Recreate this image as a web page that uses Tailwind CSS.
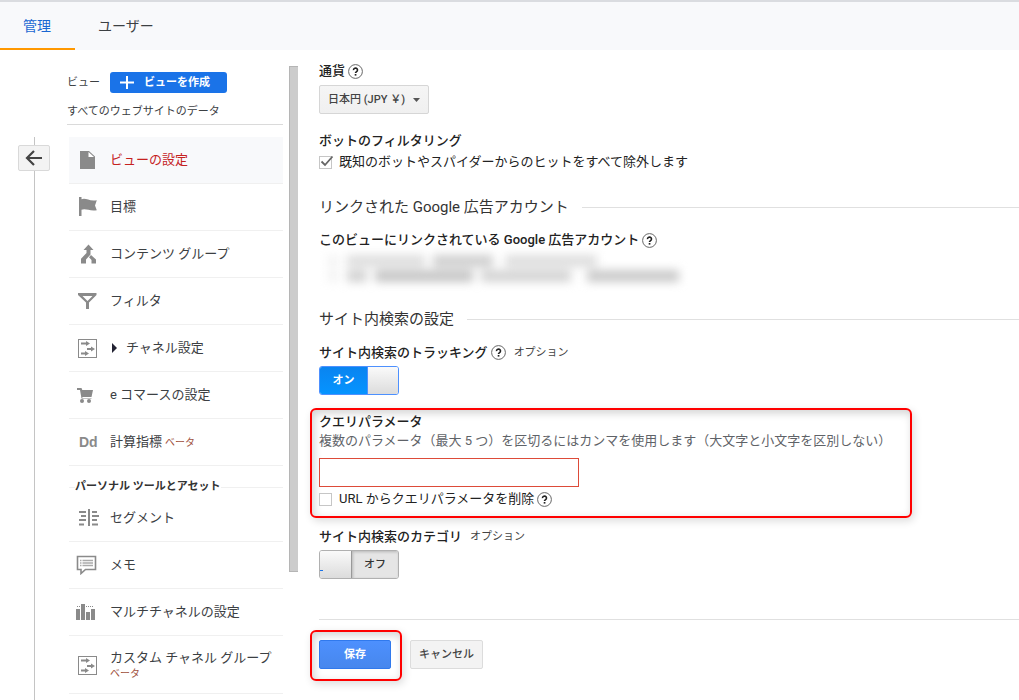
<!DOCTYPE html>
<html lang="ja">
<head>
<meta charset="utf-8">
<meta name="viewport" content="width=device-width, initial-scale=1">
<title>ビューの設定</title>
<script src="https://cdn.jsdelivr.net/npm/@tailwindcss/browser@4"></script>
</head>
<body class="flex h-screen flex-col overflow-hidden bg-white font-[Roboto,'Noto_Sans_CJK_JP',sans-serif] text-[13px] leading-[18px] text-[#222]">

<svg class="hidden" aria-hidden="true">
  <symbol id="help" viewBox="0 0 15 15">
    <circle cx="7.5" cy="7.5" r="6.9" fill="#fff" stroke="#666" stroke-width="1"/>
    <path d="M5.5 6.1a2 1.9 0 1 1 3.1 1.5c-.7.5-1.1.8-1.1 1.5" fill="none" stroke="#222" stroke-width="1.6"/>
    <rect x="6.7" y="10" width="1.7" height="1.6" fill="#222"/>
  </symbol>
  <symbol id="channel" viewBox="0 0 20 20">
    <rect x="1.5" y="1.5" width="18" height="18" fill="none" stroke="#8a8a8a"/>
    <path d="M4 4.500h5V3l4 2.500L9 8V6.500H4zM10 10h4V8.500l4 2.500-4 2.500V12h-4zM4 14.500h4V13l4 2.500L8 18v-1.500H4z" fill="#8a8a8a"/>
  </symbol>
</svg>

<header class="shrink-0 border-t border-[#dadce0] bg-white text-sm leading-5">
  <nav class="flex h-[49px] border-t border-[#dadce0] bg-[#f8f9fb]">
    <a href="#" class="border-b-2 border-[#ff9800] pt-[14px] pr-6 pl-[23px] text-[#1967d2]">管理</a>
    <a href="#" class="px-[23px] pt-[14px] text-[#3c4043]">ユーザー</a>
  </nav>
</header>

<div class="flex min-h-0 flex-1">
  <div class="flex w-[67px] shrink-0 flex-col pt-[87px]">
    <div class="ml-[34px] h-2 w-px shrink-0 bg-[#c4c4c4]"></div>
    <button type="button" aria-label="戻る" class="ml-[18px] flex h-[26px] w-8 shrink-0 items-center justify-center rounded-xs border border-[#d9d9d9] bg-[#f3f3f3]">
      <svg width="18" height="16" viewBox="0 0 18 16" fill="none" stroke="#444" stroke-width="2.200"><path d="M17 8H2M9 1L2 8l7 7"/></svg>
    </button>
    <div class="ml-[34px] w-px flex-1 bg-[#c4c4c4]"></div>
  </div>

  <aside class="w-[216px] shrink-0 pt-[22px]">
    <div class="flex h-[21px] items-center gap-[10px] text-[11px] text-[#3c4043]">
      <span>ビュー</span>
      <button type="button" class="flex h-[21px] w-[117px] items-center gap-[10px] rounded-[3px] bg-[#1a73e8] pl-[10px] font-bold text-white">
        <svg width="14" height="13" viewBox="0 0 14 13" stroke="#fff" stroke-width="2"><path d="M7 0v13M0 6.500h14"/></svg>
        ビューを作成
      </button>
    </div>
    <div class="mt-[10px] border-b border-[#dadada] pb-[3px] text-[11px] text-[#3c4043]">すべてのウェブサイトのデータ</div>

    <ul class="mt-3 ml-[2px] text-[#3c4043]">
      <li class="border-b border-[#f0f0f0] bg-[#f8f9fb]"><a href="#" class="flex h-[46px] items-center text-[#c5221f]">
        <span class="w-[41px] pl-2"><svg width="20" height="20" viewBox="0 0 20 20"><path d="M3 1h9l6 5.500V19H3z" fill="#8a8a8a"/><path d="M11.500 2v5H17z" fill="#fff"/></svg></span>ビューの設定</a></li>
      <li class="border-b border-[#f0f0f0]"><a href="#" class="flex h-[46px] items-center">
        <span class="w-[41px] pl-2"><svg width="20" height="20" viewBox="0 0 20 20" fill="#8a8a8a"><path d="M2 0h2.500v19H2zM4 2.500c5-2.300 7 2 15.800.8L18 8.500l1.800 4.800C12 14.500 9 11 4 13z"/></svg></span>目標</a></li>
      <li class="border-b border-[#f0f0f0]"><a href="#" class="flex h-[46px] items-center">
        <span class="w-[41px] pl-2"><svg width="20" height="20" viewBox="0 0 20 20" fill="#8a8a8a"><path d="M11.500 0.500L16.500 6h-3v4.500L9 15.500v4H4v-4.800L9.500 9V6h-3zM14 11l5 4.500v4h-4.500V16L12 13.300z"/></svg></span>コンテンツ グループ</a></li>
      <li class="border-b border-[#f0f0f0]"><a href="#" class="flex h-[46px] items-center">
        <span class="w-[41px] pl-2"><svg width="20" height="20" viewBox="0 0 20 20"><path fill-rule="evenodd" fill="#8a8a8a" d="M1 2h18.500v2L12 11.500V18H9v-6.500L1 4zM5.500 5l5 5 5-5z"/></svg></span>フィルタ</a></li>
      <li class="border-b border-[#f0f0f0]"><a href="#" class="flex h-[46px] items-center">
        <span class="w-[41px] pl-2"><svg width="20" height="20"><use href="#channel"/></svg></span><svg class="mr-[9px] ml-[2px]" width="5" height="10" viewBox="0 0 5 10"><path d="M0 0l5 5-5 5z" fill="#223"/></svg>チャネル設定</a></li>
      <li class="border-b border-[#f0f0f0]"><a href="#" class="flex h-[46px] items-center">
        <span class="w-[41px] pl-2"><svg width="20" height="20" viewBox="0 0 20 20" fill="#8a8a8a"><path d="M0 3h4.500l.8 2H16l-1.500 7H5.500L5 14h9.500v-.5H4.500L3 5H0z"/><circle cx="5" cy="16" r="2"/><circle cx="12" cy="16" r="2"/></svg></span>e コマースの設定</a></li>
      <li class="border-b border-[#f0f0f0]"><a href="#" class="flex h-[46px] items-center">
        <span class="w-[41px] pl-[10px] font-['Liberation_Sans',sans-serif] text-sm font-bold text-[#8a8a8a]">Dd</span>計算指標<span class="ml-[3px] pt-px text-[10px] text-[#a0503c]">ベータ</span></a></li>
    </ul>
    <h2 class="mt-[13px] ml-[2px] flex h-4 items-center text-[11px] font-bold text-[#333] before:h-px before:w-[6px] before:bg-[#f0f0f0] after:h-px after:flex-1 after:bg-[#f0f0f0]">パーソナル ツールとアセット</h2>
    <ul class="ml-[2px] text-[#3c4043]">
      <li class="border-b border-[#f0f0f0]"><a href="#" class="flex h-[46px] items-center">
        <span class="w-[41px] pl-[9px]"><svg width="22" height="18" viewBox="0 0 22 18" fill="#8a8a8a"><path d="M1 2h7v2H1zM3 6h5v2H3zM1 10h7v2H1zM1 14.500h5v2H1zM10 0h2v17h-2zM14 2h5v2h-5zM14 6h7v2h-7zM14 10h5v2h-5zM14 14.500h6v2h-6z"/></svg></span>セグメント</a></li>
      <li class="border-b border-[#f0f0f0]"><a href="#" class="flex h-[46px] items-center">
        <span class="w-[41px] pl-[7px]"><svg width="21" height="20" viewBox="0 0 21 20"><path d="M1.500 1.500h18v13H9.500L5 18.500v-4H1.500z" fill="none" stroke="#8a8a8a" stroke-width="1.600"/><path d="M4 5.500h1.500M4 8h1.500M4 10.500h1.500M6.500 5.500H17M6.500 8H17M6.500 10.500H17" stroke="#aaa" stroke-width="1.400"/></svg></span>メモ</a></li>
      <li class="border-b border-[#f0f0f0]"><a href="#" class="flex h-[46px] items-center">
        <span class="w-[41px] pl-[7px]"><svg width="20" height="18" viewBox="0 0 20 18" fill="#8a8a8a"><path d="M0 6h4v11H0zM5 1h4v16H5zM10 9h4v8h-4zM15 6h4v11h-4zM1 3h1v1H1zM3 3h1v1H3zM10 3h1v1h-1zM12 3h1v1h-1zM14 3h1v1h-1zM16 3h1v1h-1z"/></svg></span>マルチチャネルの設定</a></li>
      <li class="border-b border-[#f0f0f0]"><a href="#" class="flex h-[57px] items-center">
        <span class="w-[41px] pl-2"><svg width="20" height="20"><use href="#channel"/></svg></span>
        <span>カスタム チャネル グループ<span class="block text-[10px] leading-[14px] text-[#a0503c]">ベータ</span></span></a></li>
    </ul>
  </aside>

  <div class="mt-4 ml-[6px] h-[506px] w-[9px] shrink-0 border border-r-0 border-[#b5b5b5] bg-[#ccc]"></div>

  <main class="ml-[21px] min-w-0 flex-1 pt-3">
    <form>
      <div class="flex items-center gap-[3px]"><label for="currency" class="font-medium">通貨</label><svg width="15" height="15" role="img" aria-label="ヘルプ"><use href="#help"/></svg></div>
      <div class="relative mt-[5px] w-[110px]">
        <select id="currency" class="block h-[29px] w-full appearance-none rounded-xs border border-[#d6d6d6] bg-linear-to-b from-[#f5f5f5] to-[#f0f0f0] pl-2 text-[11px] font-medium text-[#444]"><option>日本円 (JPY ￥)</option></select>
        <svg class="pointer-events-none absolute top-[13px] right-[9px]" width="7" height="4" viewBox="0 0 7 4"><path d="M0 0h7L3.500 4z" fill="#555"/></svg>
      </div>

      <h3 class="mt-[18px] font-medium">ボットのフィルタリング</h3>
      <label class="mt-[3px] flex items-center gap-[7px]">
        <span class="relative flex">
          <input type="checkbox" checked class="size-[13px] appearance-none border border-[#c6c6c6] bg-white">
          <svg class="absolute -top-[2px] left-[1px]" width="15" height="14" viewBox="0 0 15 14"><path d="M1.500 7.500l3.500 3.500L12.500 2.500" fill="none" stroke="#666" stroke-width="1.800"/></svg>
        </span>既知のボットやスパイダーからのヒットをすべて除外します</label>

      <h2 class="mt-[26px] flex items-center gap-[13px] text-[15px] leading-5 text-[#333] after:h-px after:flex-1 after:bg-[#e0e0e0]">リンクされた Google 広告アカウント</h2>
      <div class="mt-[14px] flex items-center gap-[3px]"><h3 class="font-medium">このビューにリンクされている Google 広告アカウント</h3><svg width="15" height="15" role="img" aria-label="ヘルプ"><use href="#help"/></svg></div>
      <!-- Masked account names -->
      <div aria-hidden="true" class="flex h-11 flex-col gap-[3px] pt-[6px] pl-2 blur-[5px]">
        <div class="flex h-3 gap-2"><i class="w-3 bg-[#f4f4f4]"></i><i class="w-[78px] bg-[#dedede]"></i><i class="w-[60px] bg-[#cfcfcf]"></i><i class="ml-1 w-[92px] bg-[#dedede]"></i></div>
        <div class="flex h-3 gap-2"><i class="w-3 bg-[#f4f4f4]"></i><i class="w-5 bg-[#d2d2d2]"></i><i class="w-[98px] bg-[#c6c6c6]"></i><i class="w-[90px] bg-[#d4d4d4]"></i><i class="ml-2 w-[92px] bg-[#cacaca]"></i></div>
      </div>

      <h2 class="mt-4 flex items-center gap-[13px] text-[15px] leading-5 text-[#333] after:h-px after:flex-1 after:bg-[#e0e0e0]">サイト内検索の設定</h2>
      <div class="mt-[14px] flex items-center gap-[3px]"><h3 id="tracking" class="font-medium">サイト内検索のトラッキング</h3><svg width="15" height="15" role="img" aria-label="ヘルプ"><use href="#help"/></svg><span class="ml-[5px] pt-px text-[11px] text-[#444]">オプション</span></div>
      <button type="button" role="switch" aria-checked="true" aria-labelledby="tracking" class="mt-1 flex h-[29px] w-20 overflow-hidden rounded-[3px] border border-[#4d90fe] text-[11px] font-bold text-white">
        <span class="flex flex-1 items-center justify-center self-stretch bg-linear-to-b from-[#0a84f0] to-[#0594ff]">オン</span>
        <span class="w-[31px] self-stretch border-l border-[#4d90fe] bg-linear-to-b from-[#fafafa] to-[#dcdcdc]"></span>
      </button>

      <section class="mt-[13px] -ml-[9px] w-[602px] max-w-full rounded-md border-2 border-[#f00] pt-[3px] pb-2 pl-[7px] shadow-[2px_3px_8px_rgba(0,0,0,0.14),inset_2px_3px_8px_rgba(0,0,0,0.18)]">
        <label for="query" class="block font-medium">クエリパラメータ</label>
        <p class="mt-px text-[#5f6368]">複数のパラメータ（最大 5 つ）を区切るにはカンマを使用します（大文字と小文字を区別しない）</p>
        <input id="query" type="text" class="mt-2 block h-[29px] w-[260px] border border-[#dd4b39] bg-white px-2">
        <div class="mt-[3px] flex items-center gap-[3px]">
          <label class="flex items-center gap-[7px]"><input type="checkbox" class="size-[13px] appearance-none border border-[#c6c6c6] bg-white">URL からクエリパラメータを削除</label>
          <svg width="15" height="15" role="img" aria-label="ヘルプ"><use href="#help"/></svg>
        </div>
      </section>

      <div class="mt-[9px] flex items-center gap-2"><h3 id="category" class="font-medium">サイト内検索のカテゴリ</h3><span class="pt-px text-[11px] text-[#444]">オプション</span></div>
      <button type="button" role="switch" aria-checked="false" aria-labelledby="category" class="mt-1 flex h-[29px] w-20 overflow-hidden rounded-[3px] border border-[#b0b0b0] text-[11px] font-medium text-[#333]">
        <span class="flex w-8 items-end self-stretch border-r border-[#999] bg-linear-to-b from-[#fafafa] to-[#dcdcdc] pb-[7px]"><i class="h-px w-[3px] bg-[#1a73e8]"></i></span>
        <span class="flex flex-1 items-center justify-center self-stretch bg-[#e5e5e5] shadow-[inset_1px_1px_3px_rgba(0,0,0,0.2)]">オフ</span>
      </button>

      <div class="mt-10 h-px bg-[#e0e0e0]"></div>
      <div class="mt-[10px] -ml-[9px] flex items-start gap-2">
        <div class="rounded-md border-2 border-[#f00] pt-2 pr-[9px] pb-[10px] pl-[7px] shadow-[2px_3px_8px_rgba(0,0,0,0.14),inset_2px_3px_8px_rgba(0,0,0,0.18)]">
          <button type="submit" class="block h-[29px] w-[72px] rounded-xs border border-[#3079ed] bg-linear-to-b from-[#4d90fe] to-[#4787ed] text-[11px] font-bold text-white">保存</button>
        </div>
        <button type="button" class="mt-[10px] h-[29px] w-[73px] rounded-xs border border-[#dcdcdc] bg-[#f3f3f3] text-[11px] font-medium text-[#444]">キャンセル</button>
      </div>
    </form>
  </main>
</div>
</body>
</html>
